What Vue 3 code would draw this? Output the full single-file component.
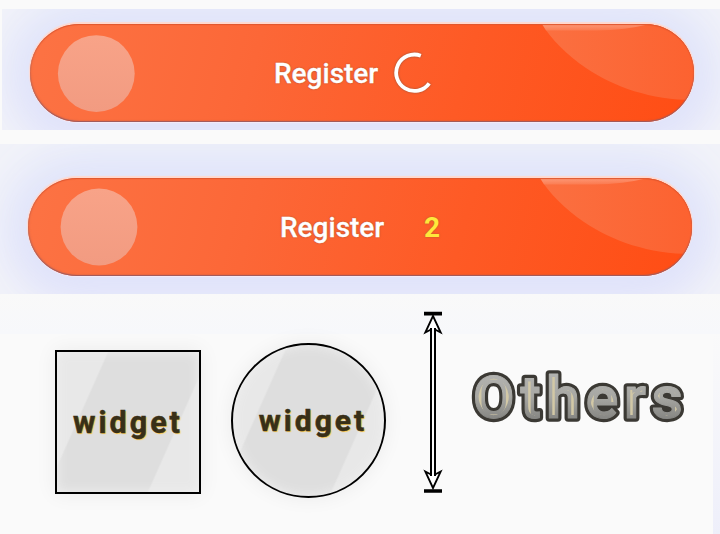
<script setup>
const buttons = [
  { id: 'loading', label: 'Register', state: 'loading' },
  { id: 'counter', label: 'Register', state: 'counter', count: 2 }
]
const widgets = ['square', 'circle']
</script>

<template>
  <main class="page">
    <section v-for="b in buttons" :key="b.id" class="band" :class="b.state">
      <button class="register">
        <svg class="decor" width="664" height="98" viewBox="0 0 664 98">
          <defs>
            <linearGradient :id="b.id + '-dot'" x1="0" y1="0" x2="0" y2="1">
              <stop offset="0" stop-color="#f8a388" />
              <stop offset="1" stop-color="#f29b81" />
            </linearGradient>
            <linearGradient :id="b.id + '-shine'" x1="0" y1="0" x2="1" y2="0">
              <stop offset="0" stop-color="#fb7041" />
              <stop offset="1" stop-color="#fc6230" />
            </linearGradient>
            <linearGradient :id="b.id + '-lip'" x1="0" y1="0" x2="0" y2="1">
              <stop offset="0" stop-color="#fff" stop-opacity=".3" />
              <stop offset="1" stop-color="#fff" stop-opacity=".1" />
            </linearGradient>
          </defs>
          <circle :cx="b.state === 'loading' ? 66.3 : 71" :cy="b.state === 'loading' ? 49.6 : 49" r="38.4" :fill="`url(#${b.id}-dot)`" />
          <path d="M512 0C520 14 538 32 556 44C584 63 621 76 664 76V0Z" :fill="`url(#${b.id}-shine)`" />
          <path d="M512 0H620Q596 6 566 6.500H516Z" :fill="`url(#${b.id}-lip)`" />
        </svg>
        <span class="label">{{ b.label }}</span>
        <svg v-if="b.state === 'loading'" class="spinner" width="42" height="42" viewBox="0 0 42 42">
          <path d="M27.800 3.700A18.200 18.200 0 1 0 36.200 31.300" />
        </svg>
        <span v-else class="count">{{ b.count }}</span>
      </button>
    </section>

    <section class="shelf">
      <div v-for="w in widgets" :key="w" class="widget" :class="w"><span>widget</span></div>
      <svg class="arrow" width="20" height="184" viewBox="0 0 20 184">
        <path class="cap" d="M1 3.600H19M1 181H19" />
        <path class="outline" d="M8 19.500L2.300 22.500L10 6L17.700 22.500L12 19.500M8 164.500L2.300 161.500L10 178L17.700 161.500L12 164.500" />
        <path class="shaft" d="M8 18V166M12 18V166" />
      </svg>
      <svg class="others" width="224" height="70" viewBox="0 0 224 70">
        <defs>
          <linearGradient id="metal" gradientUnits="userSpaceOnUse" x1="0" y1="6" x2="0" y2="54">
            <stop offset="0" stop-color="#b4b4b1" />
            <stop offset=".5" stop-color="#a8a8a4" />
            <stop offset="1" stop-color="#848481" />
          </linearGradient>
          <filter id="inner-line" x="-5%" y="-20%" width="110%" height="140%" color-interpolation-filters="sRGB">
            <feMorphology operator="erode" radius="3" />
            <feGaussianBlur stdDeviation=".5" />
          </filter>
        </defs>
        <text class="edge" x="8" y="51.500" textLength="209.500">Others</text>
        <text class="metal" x="8" y="51.500" textLength="209.500">Others</text>
        <text class="core" x="8" y="51.500" textLength="209.500" filter="url(#inner-line)">Others</text>
      </svg>
    </section>
  </main>
</template>

<style>
body { margin: 0; background: #fafafa; overflow: hidden; }
</style>

<style scoped>
.page {
  width: 720px;
  height: 534px;
  box-sizing: border-box;
  padding-top: 9px;
  background: #fafafa;
  font-family: Roboto, sans-serif;
  overflow: hidden;
}
.band { box-sizing: border-box; overflow: hidden; background: #f2f3f9; }
.loading { height: 121px; margin: 0 0 14px 2px; padding: 15px 0 0 28px; }
.counter { height: 150px; padding: 34px 0 0 28px; }
.register {
  position: relative;
  display: flex;
  align-items: center;
  width: 664px;
  height: 98px;
  padding: 0;
  border: 0;
  border-radius: 49px;
  background: linear-gradient(105deg, #fc7344 0%, #fc6737 34%, #fe5a25 65%, #ff4d14 100%);
  box-shadow: 0 -1px 1px 1px #ffd9cf, 0 1px 1px #f5eafa, 0 -6px 54px 16px #e0e5fa, 0 10px 44px 10px #dedefb;
  font-family: inherit;
}
.register::after {
  content: "";
  position: absolute;
  inset: 0;
  border-radius: inherit;
  box-shadow: inset 0 -1px 1px #9c5a60, inset 0 1px 1px #df572f, inset 1px -1px 2px #b7644f66;
}
.decor { position: absolute; inset: 0; border-radius: 49px; }
.label {
  position: relative;
  margin-left: 244px;
  width: 104px;
  color: #fff;
  font-size: 28px;
  line-height: 33px;
  font-weight: 500;
  text-align: left;
  -webkit-text-stroke: .3px #fff;
  text-shadow: 0 0 2px #8e4b32;
}
.counter .label { margin-left: 252px; }
.spinner { position: relative; margin-left: 15px; fill: none; stroke: #fff; stroke-width: 3.8; filter: drop-shadow(0 0 1px #94543d); }
.count { position: relative; margin-left: 40px; color: #ffe83b; font-size: 28px; font-weight: 700; text-shadow: 0 0 2px #a66028; }

.shelf {
  display: flex;
  align-items: flex-start;
  height: 240px;
  box-sizing: border-box;
  padding: 16px 0 0 55px;
  background:
    linear-gradient(#fafafa, #eeeffa) 713px 40px / 7px 200px no-repeat,
    linear-gradient(#f9f9f9, #f7f8fb) 0 0 / 720px 40px no-repeat,
    #fafafa;
}
.widget {
  display: flex;
  align-items: center;
  justify-content: center;
  box-sizing: border-box;
  border: 2px solid #000;
  background: linear-gradient(114deg, #e8e8e8 0 24.500%, #dedede 25.500% 74.500%, #e8e8e8 75.500%);
  color: #382f18;
  font-size: 30.5px;
  font-weight: 700;
  letter-spacing: 3px;
  -webkit-text-stroke: .5px #382f18;
  text-shadow: 1px 1px 1px #ffc94b;
  box-shadow: 0 0 20px #00000010, inset 0 0 12px #f0f0f0;
}
.square { width: 146px; height: 144px; margin-top: 40px; }
.circle { width: 155px; height: 155px; margin: 33px 0 0 30px; border-radius: 50%; font-size: 30px; }
.circle span { padding: 0 0 1px 9px; }
.arrow { margin-left: 37px; }
.arrow path { fill: none; stroke: #000; stroke-width: 2; }
.arrow .cap { stroke-width: 3.6; }
.arrow .outline { fill: #fff; stroke-width: 1.8; }
.others { margin: 56px 0 0 22px; overflow: visible; }
.others text { font-family: Roboto, sans-serif; font-size: 60px; font-weight: 700; stroke-linejoin: round; }
.edge { fill: #3b3934; stroke: #3b3934; stroke-width: 7.4px; }
.metal { fill: url(#metal); stroke: url(#metal); stroke-width: 1px; }
.core { fill: #d2c8a6; }
</style>
